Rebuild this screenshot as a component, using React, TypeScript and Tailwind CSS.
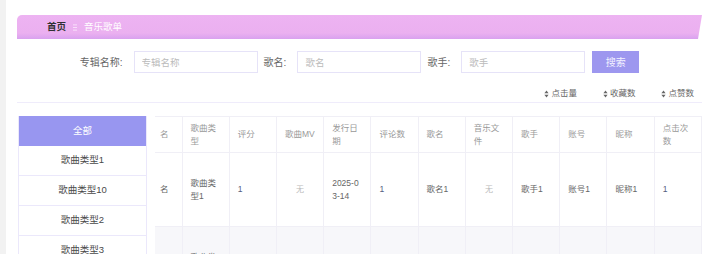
import React from 'react';

interface Song {
  id: number;
  type: string;
  score: string;
  date: string;
  comments: string;
  name: string;
  singer: string;
  account: string;
  nickname: string;
  clicks: string;
}

const songs: Song[] = [
  { id: 1, type: '歌曲类型1', score: '1', date: '2025-03-14', comments: '1', name: '歌名1', singer: '歌手1', account: '账号1', nickname: '昵称1', clicks: '1' },
  { id: 2, type: '歌曲类型2', score: '2', date: '2025-03-14', comments: '2', name: '歌名2', singer: '歌手2', account: '账号2', nickname: '昵称2', clicks: '2' },
];

const categories = ['全部', '歌曲类型1', '歌曲类型10', '歌曲类型2', '歌曲类型3'];

const headers = ['歌曲类型', '评分', '歌曲MV', '发行日期', '评论数', '歌名', '音乐文件', '歌手', '账号', '昵称', '点击次数'];

const SortIcon = () => (
  <svg width="5" height="8" viewBox="0 0 5 8" className="mr-[2px]">
    <path d="M2.5 0.5 L4.6 3.3 L0.4 3.3 Z" fill="#666" />
    <path d="M2.5 7.5 L4.6 4.7 L0.4 4.7 Z" fill="#666" />
  </svg>
);

const SearchField: React.FC<{ label: string; placeholder: string }> = ({ label, placeholder }) => (
  <div className="flex items-center">
    <span className="text-[10px] text-[#666] mr-[11px] whitespace-nowrap">{label}</span>
    <input
      placeholder={placeholder}
      className="w-[124px] h-[22px] border border-[#e6e3f8] bg-white px-[7px] text-[9.5px] text-[#666] placeholder:text-[#bbb] outline-none"
    />
  </div>
);

const cell = 'border-r border-b border-[#f0eff6] px-[8px] align-middle text-[8.5px] leading-[13px] break-all';

export default function App() {
  return (
    <div className="flex min-h-screen bg-white font-['Liberation_Sans','Noto_Sans_CJK_SC',sans-serif]">
      <div className="w-[6px] bg-[#f2f2f2]" />
      <div className="flex-1 pl-[11px] pr-[7px] pt-[15px]">
        {/* breadcrumb bar */}
        <div className="h-[24px] rounded-tl-[5px] flex items-center pl-[30px] bg-[linear-gradient(to_bottom,#edb3f2_0%,#ebb0f0_75%,#d9a1ef_100%)] [clip-path:polygon(0_0,100%_0,calc(100%-4px)_100%,0_100%)]">
          <span className="text-[9.5px] font-bold text-[#303133]">首页</span>
          <svg width="4" height="7" viewBox="0 0 4 7" className="mx-[7px]">
            <rect x="0" y="0.5" width="4" height="0.8" fill="#fbeafd" />
            <rect x="0" y="3.1" width="4" height="0.8" fill="#fbeafd" />
            <rect x="0" y="5.7" width="4" height="0.8" fill="#fbeafd" />
          </svg>
          <span className="text-[9.5px] text-white">音乐歌单</span>
        </div>

        {/* search */}
        <div className="mt-[12px] flex items-center justify-center gap-[6px]">
          <SearchField label="专辑名称:" placeholder="专辑名称" />
          <SearchField label="歌名:" placeholder="歌名" />
          <SearchField label="歌手:" placeholder="歌手" />
          <button className="w-[47px] h-[22px] ml-[1px] bg-[#9d97ef] text-[10px] text-[#f3f2ff]">搜索</button>
        </div>

        {/* sort */}
        <div className="mt-[13px] h-[17px] flex items-center justify-end gap-[26px] pr-[8px] pb-[1px] border-b border-[#efecfb]">
          {['点击量', '收藏数', '点赞数'].map((s) => (
            <span key={s} className="flex items-center text-[8.5px] text-[#666]">
              <SortIcon />
              {s}
            </span>
          ))}
        </div>

        <div className="mt-[13px] flex">
          {/* category list */}
          <div className="w-[129px] ml-[1px] mr-[8px] border-l border-r border-[#ebe8fb] self-start">
            {categories.map((c, i) => (
              <div
                key={c}
                className={
                  i === 0
                    ? 'h-[30px] flex items-center justify-center bg-[#9896f0] text-white text-[9.5px]'
                    : 'h-[30px] flex items-center justify-center border-b border-[#ebe8fb] text-[#4a4a4a] text-[9.5px]'
                }
              >
                {c}
              </div>
            ))}
          </div>

          {/* table */}
          <div className="flex-1 overflow-hidden">
            <table className="w-full table-fixed border-t border-[#f0eff6] border-collapse">
              <colgroup>
                <col className="w-[27px]" />
                {headers.map((h) => (
                  <col key={h} />
                ))}
              </colgroup>
              <thead>
                <tr className="h-[36px] text-left text-[#999]">
                  <th className={`${cell} font-normal pl-[5px] pr-0`}>名</th>
                  {headers.map((h) => (
                    <th key={h} className={`${cell} font-normal`}>{h}</th>
                  ))}
                </tr>
              </thead>
              <tbody>
                {songs.map((s, i) => (
                  <tr key={s.id} className={i % 2 ? 'h-[74px] bg-[#f7f7fa] text-[#666]' : 'h-[74px] bg-white text-[#666]'}>
                    <td className={`${cell} pl-[5px] pr-0`}>名</td>
                    <td className={cell}>{s.type}</td>
                    <td className={`${cell} text-[#55607f]`}>{s.score}</td>
                    <td className={`${cell} text-center text-[#bbb] text-[8px]`}>无</td>
                    <td className={cell}>{s.date}</td>
                    <td className={`${cell} text-[#55607f]`}>{s.comments}</td>
                    <td className={cell}>{s.name}</td>
                    <td className={`${cell} text-center text-[#bbb] text-[8px]`}>无</td>
                    <td className={cell}>{s.singer}</td>
                    <td className={cell}>{s.account}</td>
                    <td className={cell}>{s.nickname}</td>
                    <td className={`${cell} text-[#55607f]`}>{s.clicks}</td>
                  </tr>
                ))}
              </tbody>
            </table>
          </div>
        </div>
      </div>
    </div>
  );
}
